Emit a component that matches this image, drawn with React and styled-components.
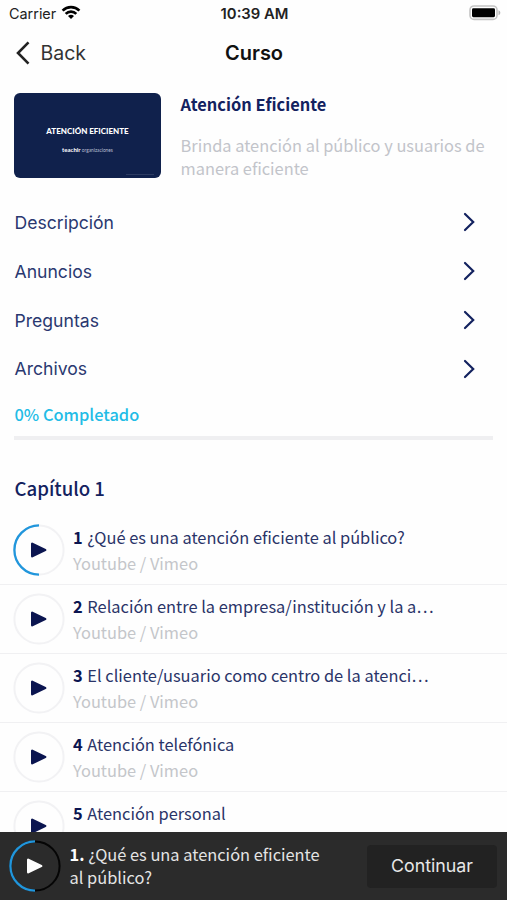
import React from 'react'
import styled, { createGlobalStyle } from 'styled-components'

const menu = ['Descripción', 'Anuncios', 'Preguntas', 'Archivos']

const lessons = [
  { title: '¿Qué es una atención eficiente al público?', source: 'Youtube / Vimeo', started: true },
  { title: 'Relación entre la empresa/institución y la a…', source: 'Youtube / Vimeo' },
  { title: 'El cliente/usuario como centro de la atenci…', source: 'Youtube / Vimeo' },
  { title: 'Atención telefónica', source: 'Youtube / Vimeo' },
  { title: 'Atención personal' },
]

function PlayRing({ track, progress, fill }) {
  return (
    <Ring viewBox="0 0 52 52">
      <circle cx="26" cy="26" r="24.6" fill="none" stroke={track} strokeWidth="2" />
      {progress && (
        <path d="M26 1.4a24.6 24.6 0 0 0 0 49.2" fill="none" stroke="#2196dc" strokeWidth="2.3" />
      )}
      <path
        d="M19.2 19.8v12.4l13-6.2z"
        fill={fill}
        stroke={fill}
        strokeWidth="2.4"
        strokeLinejoin="round"
      />
    </Ring>
  )
}

function App() {
  return (
    <Screen>
      <GlobalStyle />
      <StatusBar>
        <Carrier>
          Carrier
          <svg width="20" height="15" viewBox="0 0 20 15" fill="none" stroke="#000" strokeWidth="2.7">
            <path d="M1.6 5.6a12 12 0 0 1 16.8 0" />
            <path d="M4.7 8.9a7.5 7.5 0 0 1 10.6 0" />
            <path d="M10 14.1l-3-3a4.3 4.3 0 0 1 6 0z" fill="#000" stroke="none" />
          </svg>
        </Carrier>
        <Clock>10:39 AM</Clock>
        <Battery>
          <svg width="32" height="16" viewBox="0 0 32 16">
            <rect x="1" y="1" width="27" height="13.4" rx="4" fill="#fff" stroke="#c4c4c4" strokeWidth="1.6" />
            <rect x="3" y="3.2" width="23" height="9" rx="1.4" fill="#000" />
            <path d="M29.5 5.2c2.4 1 2.4 4 0 5z" fill="#b5b5b5" />
          </svg>
        </Battery>
      </StatusBar>

      <NavBar>
        <Back>
          <svg width="16" height="24" viewBox="0 0 16 24" fill="none" stroke="#222" strokeWidth="2.6">
            <path d="M14.5 1.4L4 12l10.5 10.6" />
          </svg>
          Back
        </Back>
        <NavTitle>Curso</NavTitle>
        <span />
      </NavBar>

      <Course>
        <Cover>
          <CoverTitle>ATENCIÓN EFICIENTE</CoverTitle>
          <CoverBrand><b>teachlr</b> organizaciones</CoverBrand>
          <CoverNote />
        </Cover>
        <Info>
          <CourseTitle>Atención Eficiente</CourseTitle>
          <Summary>Brinda atención al público y usuarios de<br />manera eficiente</Summary>
        </Info>
      </Course>

      <Menu>
        {menu.map((item) => (
          <MenuItem key={item}>
            {item}
            <svg width="14" height="20" viewBox="0 0 14 20" fill="none" stroke="#13225f" strokeWidth="2.2" strokeLinecap="round">
              <path d="M3 2l8.2 8L3 18" />
            </svg>
          </MenuItem>
        ))}
      </Menu>

      <Completed>0% Completado</Completed>
      <Track />
      <Chapter>Capítulo 1</Chapter>

      <Lessons>
        {lessons.map((lesson, i) => (
          <Lesson key={lesson.title}>
            <PlayRing track="#f2f2f4" fill="#0b1550" progress={lesson.started} />
            <LessonText>
              <LessonTitle>
                <b>{i + 1}</b> {lesson.title}
              </LessonTitle>
              {lesson.source && <Source>{lesson.source}</Source>}
            </LessonText>
          </Lesson>
        ))}
      </Lessons>

      <Player>
        <PlayRing track="#050505" fill="#fff" progress />
        <Current>
          <b>1.</b> ¿Qué es una atención eficiente<br />al público?
        </Current>
        <Continue>Continuar</Continue>
      </Player>
    </Screen>
  )
}

export default App

const GlobalStyle = createGlobalStyle`
  body {
    margin: 0;
    background: #fefefe;
  }
  * {
    box-sizing: border-box;
  }
`;

const Screen = styled.div`
  width: 507px;
  height: 900px;
  display: flex;
  flex-direction: column;
  overflow: hidden;
  background: #fefefe;
  font-family: "Noto Sans CJK SC", "Open Sans", sans-serif;
  color: #13225f;
  white-space: nowrap;
`;

const StatusBar = styled.div`
  height: 27px;
  flex: none;
  display: grid;
  grid-template-columns: 1fr auto 1fr;
  align-items: center;
  padding: 0 6px 0 9px;
  font-family: Inter, sans-serif;
  font-size: 14px;
  color: #222;
`;

const Carrier = styled.div`
  display: flex;
  align-items: center;
  gap: 5px;
  font-size: 14.4px;
  svg {
    margin-top: -2px;
  }
`;

const Clock = styled.div`
  margin-right: 1px;
  font-size: 14.8px;
  font-weight: 600;
`;

const Battery = styled.div`
  display: flex;
  justify-content: flex-end;
  margin-top: -1px;
`;

const NavBar = styled.div`
  height: 51px;
  flex: none;
  display: grid;
  grid-template-columns: 1fr auto 1fr;
  align-items: center;
  padding: 0 13px 0 14px;
  font-family: Inter, sans-serif;
  font-size: 19.5px;
`;

const Back = styled.div`
  display: flex;
  align-items: center;
  gap: 10.5px;
  color: #333;
`;

const NavTitle = styled.div`
  font-weight: 600;
  font-size: 20px;
  color: #111;
`;

const Course = styled.div`
  display: flex;
  flex: none;
  height: 119.8px;
  padding: 15px 14px 0;
  gap: 19.5px;
`;

const Cover = styled.div`
  width: 147px;
  height: 85px;
  display: flex;
  flex-direction: column;
  align-items: center;
  padding-top: 32px;
  border-radius: 6px;
  background: #10214c;
  color: #fff;
  font-family: Lato, sans-serif;
`;

const CoverTitle = styled.div`
  font-size: 8px;
  line-height: 12px;
  font-weight: 900;
`;

const CoverBrand = styled.div`
  margin-top: 9px;
  font-size: 4.8px;
  line-height: 8px;
  color: #b8bfd0;
  b {
    font-size: 6px;
    color: #fff;
  }
`;

const CoverNote = styled.div`
  width: 28px;
  height: 1px;
  margin: 20px 7px 0 auto;
  background: #2c3b62;
`;

const Info = styled.div`
  flex: 1;
  margin-top: -1px;
`;

const CourseTitle = styled.div`
  font-size: 16.4px;
  line-height: 24px;
  font-weight: 700;
`;

const Summary = styled.div`
  margin-top: 18px;
  font-size: 16.4px;
  line-height: 23px;
  color: #c2c4ca;
`;

const Menu = styled.div`
  flex: none;
`;

const MenuItem = styled.div`
  height: 48.9px;
  display: flex;
  align-items: center;
  justify-content: space-between;
  padding: 0 31.5px 0 14.5px;
  font-family: Inter, sans-serif;
  font-size: 17.6px;
  color: #2a3870;
`;

const Completed = styled.div`
  flex: none;
  height: 24px;
  margin: 9px 0 0 14.5px;
  line-height: 24px;
  font-size: 16.4px;
  font-weight: 500;
  color: #22bce6;
`;

const Track = styled.div`
  flex: none;
  height: 4px;
  margin: 9.6px 14px 0;
  background: #efeff1;
`;

const Chapter = styled.div`
  flex: none;
  height: 76.6px;
  padding: 34.4px 0 0 14.5px;
  line-height: 28px;
  font-size: 18.6px;
  font-weight: 500;
`;

const Lessons = styled.div`
  flex: 1;
  min-height: 0;
  overflow: hidden;
`;

const Lesson = styled.div`
  height: 68.8px;
  display: flex;
  align-items: center;
  gap: 8px;
  padding-left: 13px;
  border-bottom: 1.5px solid #f0f0f2;
`;

const Ring = styled.svg`
  width: 52px;
  height: 52px;
  flex: none;
`;

const LessonText = styled.div`
  height: 52px;
  line-height: 26px;
  font-size: 16.4px;
`;

const LessonTitle = styled.div`
  color: #2a3468;
  b {
    margin-right: 1px;
    color: #0b1550;
  }
`;

const Source = styled.div`
  color: #c4c6ca;
`;

const Player = styled.div`
  flex: none;
  height: 68px;
  display: flex;
  align-items: center;
  padding: 0 10px 0 9px;
  background: #2b2b2b;
`;

const Current = styled.div`
  flex: 1;
  margin-left: 8.5px;
  font-size: 16.4px;
  line-height: 23px;
  color: #e4e4e4;
  b {
    color: #fff;
  }
`;

const Continue = styled.div`
  width: 130px;
  height: 43px;
  display: flex;
  align-items: center;
  justify-content: center;
  padding-bottom: 1px;
  border-radius: 4px;
  background: #222;
  font-family: Inter, sans-serif;
  font-size: 17.8px;
  color: #e8e8e8;
`;
